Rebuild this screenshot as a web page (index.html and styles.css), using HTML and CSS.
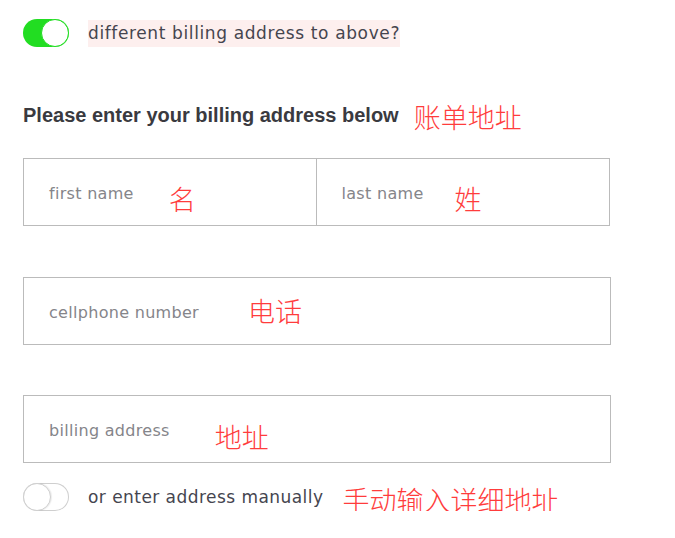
FILE: index.html
```html
<!DOCTYPE html>
<html lang="en">
<head>
<meta charset="utf-8">
<title>Billing address</title>
<link rel="stylesheet" href="styles.css">
</head>
<body>
<div class="page">
  <div class="switch-row">
    <span class="toggle on"><span class="knob"></span></span>
    <span class="switch-label hl">different billing address to above?</span>
  </div>

  <div class="heading-row">
    <h2 class="heading">Please enter your billing address below</h2>
    <span class="note note-head">账单地址</span>
  </div>

  <div class="field-row split">
    <div class="field field-first">
      <span class="ph">first name</span>
      <span class="note note-first">名</span>
    </div>
    <div class="field">
      <span class="ph">last name</span>
      <span class="note note-last">姓</span>
    </div>
  </div>

  <div class="field-row single">
    <div class="field">
      <span class="ph">cellphone number</span>
      <span class="note note-cell">电话</span>
    </div>
  </div>

  <div class="field-row single">
    <div class="field">
      <span class="ph">billing address</span>
      <span class="note note-addr">地址</span>
    </div>
  </div>

  <div class="switch-row bottom">
    <span class="toggle off"><span class="knob"></span></span>
    <span class="switch-label">or enter address manually</span>
    <span class="note note-manual">手动输入详细地址</span>
  </div>
</div>
</body>
</html>
```
FILE: styles.css
```css
* {
  box-sizing: border-box;
}

body {
  margin: 0;
  background: #ffffff;
  color: #45454f;
  font-family: "DejaVu Sans", "Liberation Sans", sans-serif;
}

.page {
  padding: 19px 0 0 23px;
}

.switch-row {
  display: flex;
  align-items: center;
  gap: 19px;
}

.switch-row.bottom {
  margin-top: 20px;
  height: 28px;
}

.toggle {
  display: flex;
  width: 46px;
  height: 28px;
  border-radius: 14px;
  flex: none;
}

.toggle .knob {
  width: 28px;
  height: 28px;
  border-radius: 50%;
  background: #ffffff;
}

.toggle.on {
  background: #22dd22;
  justify-content: flex-end;
}

.toggle.on .knob {
  border: 1.5px solid #22dd22;
}

.toggle.off {
  background: #ffffff;
  box-shadow: inset 0 0 0 1px #cfcfcf;
  justify-content: flex-start;
}

.toggle.off .knob {
  border: 1px solid #cfcfcf;
  box-shadow: 1px 0 1px rgba(0, 0, 0, 0.08);
}

.switch-label {
  font-size: 17px;
  letter-spacing: 0.45px;
  color: #45454f;
}

.hl {
  display: block;
  background: #fdefee;
  line-height: 27px;
  letter-spacing: 0.62px;
}

.heading-row {
  display: flex;
  align-items: flex-start;
  gap: 15px;
  margin-top: 56px;
}

.heading {
  margin: 0;
  font-family: "Liberation Sans", Arial, sans-serif;
  font-weight: bold;
  font-size: 20px;
  line-height: 24px;
  color: #3a3a3f;
}

.note {
  font-family: "Noto Sans CJK SC", "Noto Sans CJK JP", sans-serif;
  font-weight: 300;
  font-size: 27px;
  line-height: 30px;
  color: #ff3c3c;
}

.note-head {
  margin-top: -1px;
}

.field-row {
  margin-top: 50px;
  height: 68px;
  border: 1px solid #bbbbbb;
}

.field-row.split {
  margin-top: 26px;
  width: 587px;
  display: grid;
  grid-template-columns: 1fr 1fr;
}

.field-row.split + .field-row {
  margin-top: 51px;
}

.field-row.single {
  width: 588px;
  display: flex;
}

.field {
  display: flex;
  align-items: center;
  padding-left: 25px;
  flex: 1;
}

.field-first {
  border-right: 1px solid #bbbbbb;
}

.ph {
  font-size: 16px;
  letter-spacing: 0.3px;
  color: #85858a;
  margin-top: 2px;
}

.note-first {
  margin-left: 35px;
  margin-top: 13px;
}

.note-last {
  margin-left: 31px;
  margin-top: 13px;
}

.note-cell {
  margin-left: 49px;
  margin-top: 0;
}

.note-addr {
  margin-left: 45px;
  margin-top: 16px;
}

.note-manual {
  margin: 2px 0 -4px;
}
```
